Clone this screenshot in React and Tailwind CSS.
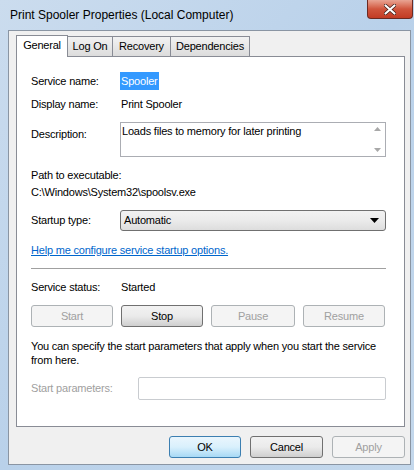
import React from 'react';

const font = { fontFamily: '"Liberation Sans", Arial, sans-serif' };

function Tab({ label, w, active }) {
  if (active) {
    return (
      <div className={`relative z-10 -mb-px flex h-[22px] items-center justify-center border border-b-0 border-[#898c95] bg-white pb-[2px] ${w}`}>
        {label}
      </div>
    );
  }
  return (
    <div className={`mt-[2px] flex h-[20px] items-center justify-center border border-l-0 border-b-0 border-[#898c95] bg-gradient-to-b from-[#f2f2f2] to-[#dcdcdc] ${w}`}>
      {label}
    </div>
  );
}

function Btn({ label, w, disabled, focused }) {
  let cls = 'border-[#707070] bg-gradient-to-b from-[#f2f2f2] via-[#ebebeb] to-[#cfcfcf] text-black';
  if (disabled) cls = 'border-[#adb2b5] bg-[#f4f4f4] text-[#a0a0a0]';
  if (focused) cls = 'border-[#3c7fb1] bg-gradient-to-b from-[#eaf6fd] via-[#d9f0fc] to-[#a7d9f5] text-black';
  return (
    <div className={`flex h-[22px] items-center justify-center rounded-[3px] border ${w} ${cls}`}>
      {label}
    </div>
  );
}

export default function App() {
  return (
    <div
      style={font}
      className="flex h-[470px] w-[414px] flex-col overflow-hidden bg-gradient-to-br from-[#cbdcee] via-[#b9d1ea] to-[#c4d8ec]"
    >
      {/* title bar */}
      <div className="relative flex h-[30px] shrink-0 items-start">
        <span className="ml-[10px] mt-[6px] text-[12px] text-black">
          Print Spooler Properties (Local Computer)
        </span>
        <div className="absolute right-[1px] top-0 flex h-[19px] w-[46px] items-center justify-center rounded-b-[4px] border border-t-0 border-[#6b2a22] bg-gradient-to-b from-[#e8a493] via-[#d0553d] to-[#c23b24]">
          <svg width="12" height="11" viewBox="0 0 12 11">
            <path d="M1.5 1.5 L10.5 9.5 M10.5 1.5 L1.5 9.5" stroke="#3a1a14" strokeWidth="3.6" strokeLinecap="round" />
            <path d="M1.5 1.5 L10.5 9.5 M10.5 1.5 L1.5 9.5" stroke="#fff" strokeWidth="2.2" strokeLinecap="round" />
          </svg>
        </div>
      </div>

      {/* client area */}
      <div className="ml-[8px] mr-[3px] flex h-[435px] shrink-0 flex-col border border-[#8a95a3] bg-[#f0f0f0] pl-[7px] pr-[5px] pt-[3px] text-[11px] tracking-[-0.2px] text-black">
        <div className="flex items-end">
          <Tab label="General" w="w-[52px]" active />
          <Tab label="Log On" w="w-[45px]" />
          <Tab label="Recovery" w="w-[58px]" />
          <Tab label="Dependencies" w="w-[79px]" />
        </div>

        <div className="flex h-[371px] flex-col border border-[#898c95] bg-white pl-[14px] pr-[18px]">
          <div className="mt-[15px] flex items-center leading-[18px]">
            <span className="w-[89px]">Service name:</span>
            <span className="bg-[#3399ff] px-[1px] text-white">Spooler</span>
          </div>
          <div className="mt-[5px] flex items-center leading-[18px]">
            <span className="w-[89px]">Display name:</span>
            <span className="ml-[1px]">Print Spooler</span>
          </div>
          <div className="mt-[9px] flex items-start leading-[18px]">
            <span className="mt-[3px] w-[89px]">Description:</span>
            <div className="flex h-[35px] flex-1 border border-[#abadb3] bg-white">
              <div className="flex-1 pl-[1px] pt-[1px] leading-[15px]">Loads files to memory for later printing</div>
              <div className="flex w-[16px] flex-col items-center justify-between py-[4px]">
                <svg width="7" height="4" viewBox="0 0 7 4"><path d="M0 4 L3.5 0 L7 4Z" fill="#a8a8a8" /></svg>
                <svg width="7" height="4" viewBox="0 0 7 4"><path d="M0 0 L3.5 4 L7 0Z" fill="#a8a8a8" /></svg>
              </div>
            </div>
          </div>
          <div className="mt-[10px] leading-[17px]">Path to executable:</div>
          <div className="leading-[17px]">C:\Windows\System32\spoolsv.exe</div>
          <div className="mt-[9px] flex items-center">
            <span className="w-[89px]">Startup type:</span>
            <div className="flex h-[21px] flex-1 items-center justify-between rounded-[3px] border border-[#707070] bg-gradient-to-b from-[#f2f2f2] via-[#ebebeb] to-[#dddddd] pl-[3px] pr-[6px]">
              <span>Automatic</span>
              <svg width="9" height="5" viewBox="0 0 9 5"><path d="M0 0 L9 0 L4.5 5Z" fill="#000" /></svg>
            </div>
          </div>
          <div className="mt-[11px] leading-[17px] text-[#0066cc] underline">Help me configure service startup options.</div>
          <div className="mt-[9px] h-px bg-[#a0a0a0]" />
          <div className="mt-[9px] flex items-center leading-[18px]">
            <span className="w-[89px]">Service status:</span>
            <span className="ml-[1px]">Started</span>
          </div>
          <div className="mt-[9px] flex gap-[8px]">
            <Btn label="Start" w="w-[82px]" disabled />
            <Btn label="Stop" w="w-[82px]" />
            <Btn label="Pause" w="w-[84px]" disabled />
            <Btn label="Resume" w="w-[82px]" disabled />
          </div>
          <div className="mt-[12px] leading-[14px]">
            You can specify the start parameters that apply when you start the service from here.
          </div>
          <div className="mt-[10px] flex items-center">
            <span className="w-[107px] text-[#a0a0a0]">Start parameters:</span>
            <div className="h-[23px] flex-1 rounded-[2px] border border-[#c9ccd0] bg-white" />
          </div>
        </div>

        <div className="mt-[9px] flex justify-end gap-[9px]">
          <Btn label="OK" w="w-[72px]" focused />
          <Btn label="Cancel" w="w-[73px]" />
          <Btn label="Apply" w="w-[73px]" disabled />
        </div>
      </div>
    </div>
  );
}
